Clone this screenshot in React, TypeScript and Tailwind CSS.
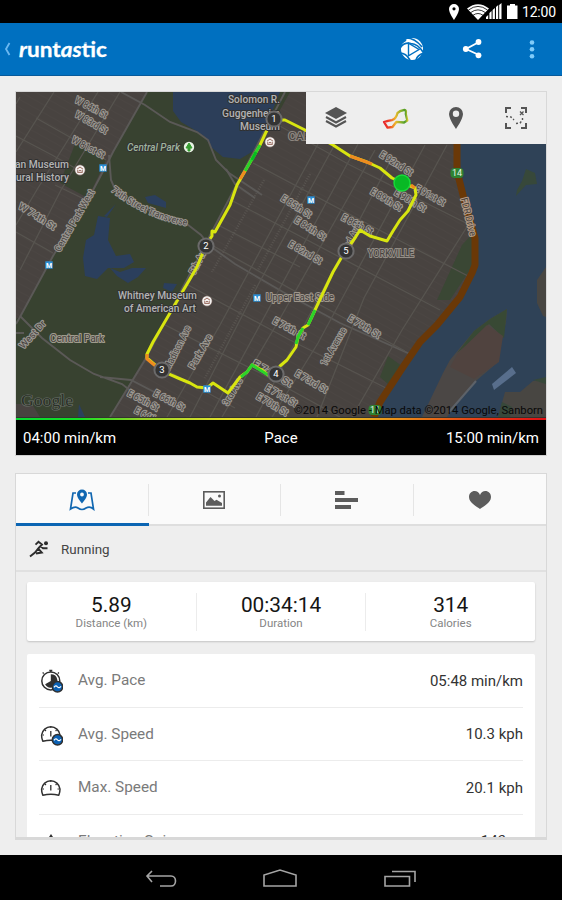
import type { ReactNode } from "react";

type Label = { x: number; y: number; t: string; r?: number; s?: number; w?: number; c?: string; anchor?: "start" | "middle" | "end" };

const streets: Label[] = [
  { x: 91, y: 108, t: "W 84th St", r: 28, w: 35 },
  { x: 91, y: 123, t: "W 83rd St", r: 30, w: 36 },
  { x: 88, y: 148, t: "W 81st St", r: 28, w: 36 },
  { x: 37, y: 217, t: "W 74th St", r: 32, w: 42 },
  { x: 75, y: 221, t: "Central Park West", r: -60, w: 70 },
  { x: 33, y: 335, t: "West Dr", r: -48, w: 34 },
  { x: 296, y: 207, t: "E 85th St", r: 32, w: 34 },
  { x: 310, y: 229, t: "E 84th St", r: 32, w: 35 },
  { x: 305, y: 253, t: "E 82nd St", r: 30, w: 37 },
  { x: 357, y: 225, t: "E 86th St", r: 27, w: 34 },
  { x: 396, y: 164, t: "E 92nd St", r: 32, w: 37 },
  { x: 386, y: 200, t: "E 89th St", r: 31, w: 35 },
  { x: 410, y: 201, t: "E 90th St", r: 31, w: 35 },
  { x: 430, y: 196, t: "E 91st St", r: 29, w: 33 },
  { x: 289, y: 329, t: "E 76th St", r: 28, w: 36 },
  { x: 364, y: 327, t: "E 79th St", r: 31, w: 36 },
  { x: 311, y: 382, t: "E 73rd St", r: 30, w: 36 },
  { x: 272, y: 374, t: "E 74th St", r: 30, w: 44 },
  { x: 281, y: 396, t: "E 71st St", r: 30, w: 35 },
  { x: 272, y: 405, t: "E 70th St", r: 31, w: 35 },
  { x: 143, y: 401, t: "E 65th St", r: 28, w: 34 },
  { x: 169, y: 401, t: "E 66th St", r: 28, w: 34 },
  { x: 150, y: 418, t: "E 64th St", r: 28, w: 34 },
  { x: 178, y: 348, t: "Madison Ave", r: -63, w: 48 },
  { x: 201, y: 352, t: "Park Ave", r: -60, w: 38 },
  { x: 233, y: 392, t: "3rd Ave", r: -60, w: 30 },
  { x: 334, y: 347, t: "1st Avenue", r: -60, w: 42 },
  { x: 199, y: 261, t: "5th Ave", r: -62, w: 30 },
  { x: 352, y: 238, t: "2nd Ave", r: -62, w: 30 },
];

const ROUTE =
  "M274 120L285 120L305 130L333 145L350 156L367 162L380 168L392 178L403 183L415 188L416 195L408 211L400 220L393 231L387 241L370 236L360 230L355 238L346 250L340 260L333 272L323 293L315 310L308 325L303 328L298 337L296 347L287 360L280 366L275 373L268 375L262 370L252 365L247 372L240 377L228 393L213 383L207 388L197 387L190 383L178 378L162 371L147 358L147 354L153 342L197 267L206 245L212 236L212 231L215 232L230 205L237 185L245 171L260 145L268 128Z";

function MapText({ l }: { l: Label }) {
  return (
    <text
      x={l.x}
      y={l.y}
      textAnchor={l.anchor ?? "middle"}
      dominantBaseline="middle"
      transform={l.r ? `rotate(${l.r} ${l.x} ${l.y})` : undefined}
      textLength={l.w}
      lengthAdjust="spacingAndGlyphs"
      fontSize={l.s ?? 9.5}
      fill="#45413e"
      stroke={l.c ?? "#9b9791"}
      strokeWidth="2.2"
      strokeLinejoin="round"
      paintOrder="stroke"
    >
      {l.t}
    </text>
  );
}

function PlaceText({ x, y, t, w, anchor = "end", c = "#b3b3b4" }: { x: number; y: number; t: string; w: number; anchor?: "start" | "end"; c?: string }) {
  return (
    <text x={x} y={y} textAnchor={anchor} textLength={w} lengthAdjust="spacingAndGlyphs" fontSize="10.8" fontWeight="500" fill={c} stroke="#313131" strokeWidth="2" strokeLinejoin="round" paintOrder="stroke">
      {t}
    </text>
  );
}

function MetroStop({ x, y }: { x: number; y: number }) {
  return (
    <g>
      <rect x={x - 3.7} y={y - 3.7} width="7.4" height="7.4" fill="#2b8fd6" />
      <text x={x} y={y + 2.6} textAnchor="middle" fontSize="7" fontWeight="bold" fill="#fff">M</text>
    </g>
  );
}

function MuseumPin({ x, y }: { x: number; y: number }) {
  return (
    <g>
      <circle cx={x} cy={y} r="5.2" fill="#f3f0ee" stroke="#5a4640" strokeWidth=".6" />
      <path d={`M${x - 3} ${y - 0.8}L${x} ${y - 3}L${x + 3} ${y - 0.8}M${x - 2.2} ${y}V${y + 2.2}M${x + 2.2} ${y}V${y + 2.2}M${x - 1} ${y + 0.6}H${x + 1}M${x - 2.6} ${y + 2.4}H${x + 2.6}`} fill="none" stroke="#8d5a4d" strokeWidth=".9" />
    </g>
  );
}

function KmMarker({ x, y, n }: { x: number; y: number; n: number }) {
  return (
    <g>
      <circle cx={x} cy={y} r="7.6" fill="#343434" stroke="#6b6a6a" strokeWidth="2" />
      <text x={x} y={y + 3.4} textAnchor="middle" fontSize="9.5" fill="#fff">{n}</text>
    </g>
  );
}

function RouteMap() {
  return (
    <svg viewBox="16 92 530 325" className="block h-[325px] w-[530px]" fontFamily="Roboto, sans-serif">
      <defs>
        <pattern id="blocks" width="7" height="7" patternUnits="userSpaceOnUse" patternTransform="rotate(29)">
          <path d="M0 0H7" stroke="#504b47" strokeWidth=".7" />
        </pattern>
      </defs>
      <rect x="16" y="92" width="530" height="325" fill="#484340" />
      <rect x="16" y="92" width="530" height="325" fill="url(#blocks)" />
      <path d="M147 92L113 152L90 196L53 255L20 317L16 319V417H110L145 357L206 243L290 92Z" fill="#384230" />
      <path d="M75 144L106 160L88 198L60 183Z" fill="#384230" />
      <path d="M16 404H32L40 417H16Z" fill="#484340" />
      <path d="M173 92L173 111L181 122L193 129L204 136L211 147L223 157L240 159L257 149L280 92Z" fill="#2c3e59" />
      <path d="M145 197L155 195L166 202L166 208L148 203ZM98 216L110 218L108 240L116 256L130 254L134 262L124 268L108 268L97 279L85 276L83 258L86 240L94 235ZM110 268L120 272L132 268L146 268L138 277L128 283L117 276ZM116 204L107 217L104 216ZM164 283L177 284L172 292L163 288ZM79 404L85 417H78Z" fill="#2b3f5d" />
      <path d="M460 92H546V417H376L403 367L437 325L460 297L475 265L475 235L467 211L457 171Z" fill="#2f4257" />
      <path d="M462 245L474 232L475 262L450 300L437 300ZM388 356L402 366L390 386L380 377Z" fill="#3a4734" />
      <path d="M507 309L506 322L503 334L497 363L477 380L457 403L447 417H422L443 373L450 360L474 331L490 319Z" fill="#4b4745" />
      <path d="M507 309L504 338L489 324L467 345L457 353L474 331L490 319Z" fill="#384934" />
      <path d="M458 353L487 325L503 336L499 362L474 379L450 367Z" fill="#50433f" />
      <path d="M476 381L449 412" stroke="#5d6269" strokeWidth="2" />
      <path d="M546 267L537 280V303L543 316L546 317ZM546 380L533 381L520 392L505 392L498 417H546Z" fill="#484642" />
      <path d="M526 169L535 173L537 184L526 185L516 196L517 190L522 181ZM533 380L546 377V384ZM502 402L512 407L510 417H498Z" fill="#37483a" />
      <path d="M492 384L512 367L516 373L494 390Z" fill="#586e8c" />

      <g fill="none" stroke="#5b5957" strokeWidth="1.9">
        <path d="M147 92L113 152L109 160L90 196L53 256L20 317L16 324M285 92L206 243L145 360L110 417" />
        <path d="M121 92L145 105L170 122L197 132L208 140L216 160L229 173L250 187L262 195M109 155L111 180L118 196L150 211L187 224L201 235L210 246L235 264L283 292L340 323L410 354" />
        <path d="M20 316L42 338L70 360L94 374L122 384L141 399M100 377L131 380L160 395M16 333H24M226 169L235 184L255 198" />
      </g>
      <g fill="none" stroke="#57544f" strokeWidth="1.3">
        <path d="M54 92L16 152M98 92L38 188L16 225M120 92L61 190L20 270M16 136L52 155L82 172M36 118L75 140L106 160M16 232L53 253M55 185L82 198M20 97L16 104" />
        <path d="M318 144L220 325L167 417M335 144L258 285L190 417M358 144L210 417M375 150L282 315L222 417M392 158L256 417M425 145L318 343L272 417M447 145L364 298L317 417M470 222L402 330L352 417M253 163L385 233L468 276M231 200L330 252L440 310M208 243L300 294L405 351M188 285L290 340L390 390M165 325L260 373L340 417M145 358L235 408M278 125L350 165L470 225M218 225L300 267" />
      </g>
      <path d="M310 174L258 270M264 180L212 272M255 285L205 378" stroke="#64605b" strokeWidth="2.4" strokeDasharray="1 1.5" opacity=".6" />
      <path d="M457 140V171L467 211L475 238V265L472 273L460 297L437 325L420 342L403 367L380 402L374 417" fill="none" stroke="#6a3807" strokeWidth="7" strokeLinejoin="round" />

      <g>
        {streets.map((l, i) => <MapText key={i} l={l} />)}
        <MapText l={{ x: 468, y: 217, t: "FDR Drive", r: 76, w: 39, c: "#b29a84" }} />
        <MapText l={{ x: 391, y: 254, t: "YORKVILLE", w: 46, s: 10, c: "#948e87" }} />
        <MapText l={{ x: 316, y: 137, t: "CARNEGIE", w: 55, s: 10, c: "#8c857e" }} />
        <MapText l={{ x: 300, y: 298, t: "Upper East Side", w: 68, s: 10.5, c: "#9d958b" }} />
        <MapText l={{ x: 77, y: 339, t: "Central Park", w: 54, s: 10.5, c: "#a09c8d" }} />
      </g>
      <path id="transverse" d="M111 191Q146 219 193 227" fill="none" />
      <text fontSize="9.5" fill="#45413e" stroke="#9b9791" strokeWidth="2.2" strokeLinejoin="round" paintOrder="stroke" textLength="84" lengthAdjust="spacingAndGlyphs">
        <textPath href="#transverse">79th Street Transverse</textPath>
      </text>
      <path d={ROUTE} fill="none" stroke="#d8e510" strokeWidth="3" strokeLinejoin="round" />
      <path d="M245 171L260 145M315 310L308 325M303 328L298 337L296 344M268 375L252 365L247 372L241 377" stroke="#2bd32a" strokeWidth="3" fill="none" />
      <path d="M252 160L256 152" stroke="#05bd20" strokeWidth="3" />
      <path d="M350 156L372 164M411 185L415 188M240 179L245 171M158 368L147 359V354" stroke="#ef8b20" strokeWidth="3" fill="none" />
      <PlaceText x={69} y={168} t="an Museum" w={54} />
      <PlaceText x={69} y={181} t="ural History" w={53} />
      <PlaceText x={280} y={103} t="Solomon R." w={52} />
      <PlaceText x={280} y={117} t="Guggenheim" w={58} />
      <PlaceText x={280} y={130} t="Museum" w={40} />
      <PlaceText x={197} y={299} t="Whitney Museum" w={79} />
      <PlaceText x={196} y={312} t="of American Art" w={72} />
      <g fontStyle="italic"><PlaceText x={127} y={151} t="Central Park" w={53} anchor="start" c="#9fb39c" /></g>
      <circle cx="189" cy="147" r="5.2" fill="#e9f3e5" />
      <path d="M189 143L192 148H190V151H188V148H186Z" fill="#389e32" stroke="#389e32" />
      <MuseumPin x={80} y={170} />
      <MuseumPin x={270} y={142} />
      <MuseumPin x={207} y={301} />
      <MetroStop x={103} y={168} />
      <MetroStop x={49} y={265} />
      <MetroStop x={311} y={200} />
      <MetroStop x={257} y={298} />
      <MetroStop x={207} y={389} />
      {[{ x: 457, y: 173, n: "14" }, { x: 375, y: 410, n: "11" }].map((b) => (
        <g key={b.n}>
          <rect x={b.x - 6.5} y={b.y - 5} width="13" height="10" rx="4" fill="#2f8333" />
          <text x={b.x} y={b.y + 3.2} textAnchor="middle" fontSize="9" fill="#e8f6e8">{b.n}</text>
        </g>
      ))}
      <KmMarker x={274} y={119} n={1} />
      <KmMarker x={206} y={246} n={2} />
      <KmMarker x={162} y={370} n={3} />
      <KmMarker x={276} y={374} n={4} />
      <KmMarker x={346} y={251} n={5} />
      <circle cx="402" cy="183" r="8" fill="#08b925" stroke="#18db39" strokeWidth="1.4" />
      <text x="21" y="406" fontSize="17" fontFamily="Liberation Serif, serif" textLength="52" lengthAdjust="spacingAndGlyphs" fill="#2a3028" stroke="#6a7169" strokeWidth="1.2" paintOrder="stroke">Google</text>
      <text x="543" y="414" textAnchor="end" textLength="249" lengthAdjust="spacingAndGlyphs" fontSize="10.5" fill="#080808">©2014 Google - Map data ©2014 Google, Sanborn</text>
    </svg>
  );
}

function StatusBar() {
  return (
    <div className="flex h-[23px] shrink-0 items-center justify-end bg-black pr-[5px] text-white">
      <svg viewBox="448 0 74 23" className="h-[23px] w-[74px]" fill="#fff">
        <path fillRule="evenodd" d="M454 4A5 5 0 0 0 449 9C449 13 454 20 454 20C454 20 459 13 459 9A5 5 0 0 0 454 4ZM454 7.2A1.6 1.6 0 1 1 454 10.4A1.6 1.6 0 0 1 454 7.2Z" />
        <path d="M467 8.5Q478 0 489 8.5L478 20Z" />
        <g fill="none" stroke="#000" strokeWidth=".8">
          <path d="M468.5 10Q478 2.8 487.5 10M470.5 12.7Q478 7 485.5 12.7M473 15.3Q478 11.7 483 15.3" />
        </g>
        <path d="M486 19V17L488.2 15V19ZM489.4 19V13L491.6 11V19ZM492.6 19V10L494.9 8V19ZM496 19V7L498.2 5V19ZM499.2 19V5L501.5 3V19Z" />
        <path d="M507 5.5H510V4H515V5.5H517.5V19H507Z" />
      </svg>
      <span className="w-[35px] whitespace-nowrap text-[14px] leading-none tracking-[-0.2px]">12:00</span>
    </div>
  );
}

function ActionBar() {
  return (
    <header className="flex h-[53px] shrink-0 items-center border-b border-[#075a9b] bg-[#0070c0] pl-[3px] pr-[20px]">
      <svg viewBox="0 0 8 16" className="h-4 w-2" fill="none" stroke="#6bb8f1" strokeWidth="1.8"><path d="M6.5 2L3 8L6.5 14" /></svg>
      <svg viewBox="17 37 92 26" className="ml-[6px] h-[26px] w-[92px]">
        <text x="19" y="58" fontFamily="Lato, sans-serif" fontSize="21" fontWeight="700" fill="#fff" stroke="#fff" strokeWidth=".3" textLength="88" lengthAdjust="spacingAndGlyphs">
          <tspan fontStyle="italic">r</tspan>unt<tspan fontStyle="italic">as</tspan>tic
        </text>
        <path d="M53 44.1H61M84 44.1H92M53 41.9H61M84 41.9H92" stroke="#0070c0" strokeWidth=".8" />
      </svg>
      <div className="flex-1" />
      <svg viewBox="0 0 24 24" className="h-6 w-6">
        <circle cx="12" cy="12" r="11" fill="#fff" />
        <path d="M0 11Q4 5 11 6.5Q18 7 23 15M6 1Q15 1 22 10M0 7L6 3M0 16Q6 16 10 23M16 23Q17 18 24 16" fill="none" stroke="#0070c0" strokeWidth="1.7" />
        <path d="M8.5 6.2L19 12.5L8.5 18.8Z" fill="#fff" stroke="#0070c0" strokeWidth="1.4" />
      </svg>
      <svg viewBox="462 39 20 22" className="ml-[38px] h-[22px] w-5" fill="#fff">
        <path d="M479 43L466 50L479 56" fill="none" stroke="#fff" strokeWidth="1.8" />
        <circle cx="478.5" cy="43" r="2.9" /><circle cx="465.8" cy="50" r="2.9" /><circle cx="478.5" cy="56.3" r="2.9" />
      </svg>
      <svg viewBox="0 0 20 22" className="ml-[40px] h-[22px] w-5" fill="#80cbf9">
        <circle cx="10" cy="4.5" r="2.3" /><circle cx="10" cy="11.3" r="2.3" /><circle cx="10" cy="18.2" r="2.3" />
      </svg>
    </header>
  );
}

function MapToolbar() {
  return (
    <div className="absolute right-0 top-0 grid h-[52px] w-[240px] grid-cols-4 place-items-center bg-[#eeeeee]">
      <svg viewBox="0 0 24 24" className="h-6 w-6" fill="#555">
        <path d="M12 1L23 7L12 13L1 7Z" />
        <path d="M2 11L12 16.5L22 11M2 15L12 20.5L22 15" fill="none" stroke="#555" strokeWidth="2" />
      </svg>
      <svg viewBox="382 105 28 24" className="h-6 w-7" fill="none" strokeWidth="2.3" strokeLinejoin="round">
        <defs>
          <linearGradient id="heat" gradientUnits="userSpaceOnUse" x1="383" y1="0" x2="408" y2="0"><stop offset="0" stopColor="#e5202a" /><stop offset=".25" stopColor="#ef4126" /><stop offset=".5" stopColor="#edb72b" /><stop offset=".72" stopColor="#8cb32b" /><stop offset=".88" stopColor="#4c9c2d" /><stop offset="1" stopColor="#e0cb2e" /></linearGradient>
        </defs>
        <path d="M384 121L388 119.8L392 119.2Q396 118 397.5 112L400 110.2L404.5 108.8Q406.5 109 405.8 113L407.3 119.5L404 121.5L396.5 120.8L392.5 126L387.5 126.6Z" stroke="url(#heat)" />
      </svg>
      <svg viewBox="0 0 24 24" className="h-6 w-6" fill="#555"><path fillRule="evenodd" d="M12 1A7 7 0 0 0 5 8C5 13 12 23 12 23S19 13 19 8A7 7 0 0 0 12 1ZM12 4.5A3.2 3.2 0 1 1 12 10.9A3.2 3.2 0 0 1 12 4.5Z" /></svg>
      <svg viewBox="0 0 24 24" className="h-6 w-6" fill="none" stroke="#555" strokeWidth="2">
        <path d="M2 7V2H7M17 2H22V7M22 17V22H17M7 22H2V17" />
        <path d="M2 10.5L7 11L10 14M12 17.5L16 17L18.5 14V10" strokeWidth="1.4" strokeDasharray="2 2" />
        <path d="M16 5.5L19.5 9M19.5 5.5L16 9" strokeWidth="1.3" />
      </svg>
    </div>
  );
}

function MapCard() {
  return (
    <section className="mx-[15px] mt-[15px] h-[365px] shrink-0 border border-[#d8d8d8] border-b-[#cfcfcf]">
      <div className="relative h-[325px]">
        <RouteMap />
        <MapToolbar />
      </div>
      <div className="h-[3px] border-t border-[#33332f] bg-[linear-gradient(90deg,#08d932_0%,#14df25_12%,#9ad329_24%,#e5e12a_40%,#e8d42a_55%,#e88b18_73%,#e43a16_88%,#e00f14_100%)]" />
      <div className="grid h-[35px] grid-cols-3 items-center bg-black px-[7px] pt-[2px] text-[15px] leading-none text-white">
        <span>04:00 min/km</span>
        <span className="text-center">Pace</span>
        <span className="text-right">15:00 min/km</span>
      </div>
    </section>
  );
}

function Tab({ children, active = false, last = false }: { children: ReactNode; active?: boolean; last?: boolean }) {
  return (
    <div className={active ? "flex h-[52px] items-center border-b-[3px] border-[#0b65b3] pt-[2px]" : "flex h-[52px] items-center border-b-2 border-[#dedede] pt-[1px]"}>
      <div className={last ? "flex h-[32px] flex-1 items-center justify-center" : "flex h-[32px] flex-1 items-center justify-center border-r border-[#e5e5e5]"}>{children}</div>
    </div>
  );
}

function Tabs() {
  return (
    <div className="grid shrink-0 grid-cols-4 bg-[#fafafa]">
      <Tab active>
        <svg viewBox="0 0 26 22" className="h-[22px] w-[26px]" fill="none" stroke="#1167b1" strokeWidth="1.7">
          <path d="M7 4H4L1.5 20Q6 17 9 19Q13 22 17 19Q21 17 24.5 20L22 4H19" />
          <path d="M13 .5A5 5 0 0 0 8 5.5C8 9 13 14.5 13 14.5S18 9 18 5.5A5 5 0 0 0 13 .5ZM13 3.6A1.9 1.9 0 1 1 13 7.4A1.9 1.9 0 0 1 13 3.6Z" fill="#1167b1" fillRule="evenodd" stroke="none" />
        </svg>
      </Tab>
      <Tab>
        <svg viewBox="0 0 22 18" className="h-[18px] w-[22px]" fill="#5c5c5c">
          <rect x=".8" y=".8" width="20.4" height="16.4" fill="none" stroke="#5c5c5c" strokeWidth="1.6" />
          <path d="M3 14.8V11.5L7.5 6L11.5 10L13.5 8.8L19 12V14.8Z" /><circle cx="16.5" cy="5" r="1.5" />
        </svg>
      </Tab>
      <Tab>
        <svg viewBox="0 0 23 18" className="h-[18px] w-[23px]" fill="#5c5c5c"><path d="M0 0H9.5V4H0ZM0 7H23V11H0ZM0 14H16V18H0Z" /></svg>
      </Tab>
      <Tab last>
        <svg viewBox="0 0 22 18" className="h-[18px] w-[22px]" fill="#5c5c5c"><path d="M11 18C8 15.5 0 12 0 6C0 2.5 2.5 0 5.7 0C8 0 10 1.5 11 4C12 1.5 14 0 16.3 0C19.5 0 22 2.5 22 6C22 12 14 15.5 11 18Z" /></svg>
      </Tab>
    </div>
  );
}

function AverageBadge() {
  return (
    <>
      <circle cx="18.5" cy="17.8" r="5.2" fill="#0b61b4" />
      <path d="M15 18.3Q16.8 15.6 18.5 17.8Q20.2 19.6 22 17.3" fill="none" stroke="#fff" strokeWidth="1.2" />
    </>
  );
}

function GaugeIcon({ avg = false }: { avg?: boolean }) {
  return (
    <svg viewBox="0 0 24 24" className="h-6 w-6" fill="none" stroke="#303030" strokeWidth="1.5">
      <path d="M3.8 19.2Q2.5 16.5 2.6 13A9.3 9.6 0 0 1 21 13Q21 16.5 19.8 19.2Q12 17.4 3.8 19.2Z" strokeLinejoin="round" />
      <path d="M11.8 9V14.5" strokeWidth="1.3" />
      <path d="M3.5 13H5M20 13H18.5M6 8L7 9M17.6 8L16.6 9M11.8 4.5V6" strokeWidth="1.1" />
      {avg && <AverageBadge />}
    </svg>
  );
}

function PaceIcon() {
  return (
    <svg viewBox="0 0 24 24" className="h-6 w-6" fill="none" stroke="#303030" strokeWidth="1.5">
      <circle cx="11.8" cy="11.9" r="9" /><path d="M11.8 .9V3M10.3 1.5H13.3M4.6 3.5L3.8 4.5M19 3.5L19.8 4.5" />
      <path d="M11.8 11.9V5.3A6.6 6.6 0 1 1 6.1 15.2Z" fill="#303030" stroke="none" />
      <AverageBadge />
    </svg>
  );
}

function Stat({ value, label }: { value: string; label: string }) {
  return (
    <div className="flex-1 text-center">
      <div className="text-[20.8px] leading-[24px] text-[#151515]">{value}</div>
      <div className="text-[11.5px] leading-[13px] text-[#858585]">{label}</div>
    </div>
  );
}

function Row({ icon, label, value }: { icon: ReactNode; label: string; value: string }) {
  return (
    <div className="flex h-[53.5px] shrink-0 items-center border-b border-[#ececec] pt-[1px] text-[15.3px]">
      {icon}
      <span className="ml-[15px] flex-1 text-[#7a7a7a]">{label}</span>
      <span className="text-[15px] text-[#333]">{value}</span>
    </div>
  );
}

function DetailsCard() {
  return (
    <section className="mx-[15px] mt-[17px] flex h-[367px] shrink-0 flex-col overflow-hidden border border-b-[3px] border-[#d8d8d8]">
      <Tabs />
      <div className="flex h-[46px] shrink-0 items-center border-b-2 border-[#e0e0e0] pl-[13px]">
        <svg viewBox="0 0 20 18" className="mt-[2px] h-[18px] w-5" fill="none" stroke="#2d2d2d" strokeWidth="1.9">
          <path d="M1 16.5L6 12.5L9.2 8.5L12.8 12.5L7 13.5M6.5 4.6L9.5 1.8L13 4.5L9.2 8.5M12 6.5L14 8.2L18.5 8.2" />
          <circle cx="17" cy="3.3" r="2" fill="#2d2d2d" stroke="none" />
        </svg>
        <span className="ml-[12px] pt-[4px] text-[13.4px] text-[#444]">Running</span>
      </div>
      <div className="mx-[11px] mt-[10px] flex h-[59px] shrink-0 items-center rounded-[2px] bg-white shadow-[0_1px_2px_rgba(0,0,0,0.18)]">
        <Stat value="5.89" label="Distance (km)" />
        <div className="h-[38px] w-px bg-[#ececec]" />
        <Stat value="00:34:14" label="Duration" />
        <div className="h-[38px] w-px bg-[#ececec]" />
        <Stat value="314" label="Calories" />
      </div>
      <div className="mx-[11px] mt-[13px] flex min-h-0 flex-1 flex-col overflow-hidden rounded-t-[2px] bg-white px-[12px]">
        <Row icon={<PaceIcon />} label="Avg. Pace" value="05:48 min/km" />
        <Row icon={<GaugeIcon avg />} label="Avg. Speed" value="10.3 kph" />
        <Row icon={<GaugeIcon />} label="Max. Speed" value="20.1 kph" />
        <Row
          icon={<svg viewBox="0 0 24 24" className="h-6 w-6" fill="#303030"><path d="M12 5L22 20H2Z" /></svg>}
          label="Elevation Gain"
          value="143 m"
        />
      </div>
    </section>
  );
}

function NavBar() {
  return (
    <nav className="flex h-[45px] shrink-0 items-center justify-center gap-[86px] bg-black">
      <svg viewBox="145 868 32 20" className="h-5 w-8" fill="none" stroke="#a5a5a5" strokeWidth="1.6"><path d="M152 871L147 876L152 882M147 876H171C177 876 177 886 171 886H160" /></svg>
      <svg viewBox="264 868 34 20" className="h-5 w-[34px]" fill="none" stroke="#a5a5a5" strokeWidth="1.6"><path d="M265 886V875L281 870L297 875V886Z" /></svg>
      <svg viewBox="385 868 34 20" className="h-5 w-[34px]" fill="none" stroke="#a5a5a5" strokeWidth="1.6"><path d="M387 876.5H411.5V886H387ZM394 871.5H417V882" /></svg>
    </nav>
  );
}

export default function App() {
  return (
    <div className="flex h-[900px] w-[562px] flex-col overflow-hidden bg-[#eeeeee] font-['Roboto',sans-serif]">
      <StatusBar />
      <ActionBar />
      <MapCard />
      <DetailsCard />
      <div className="flex-1" />
      <NavBar />
    </div>
  );
}
